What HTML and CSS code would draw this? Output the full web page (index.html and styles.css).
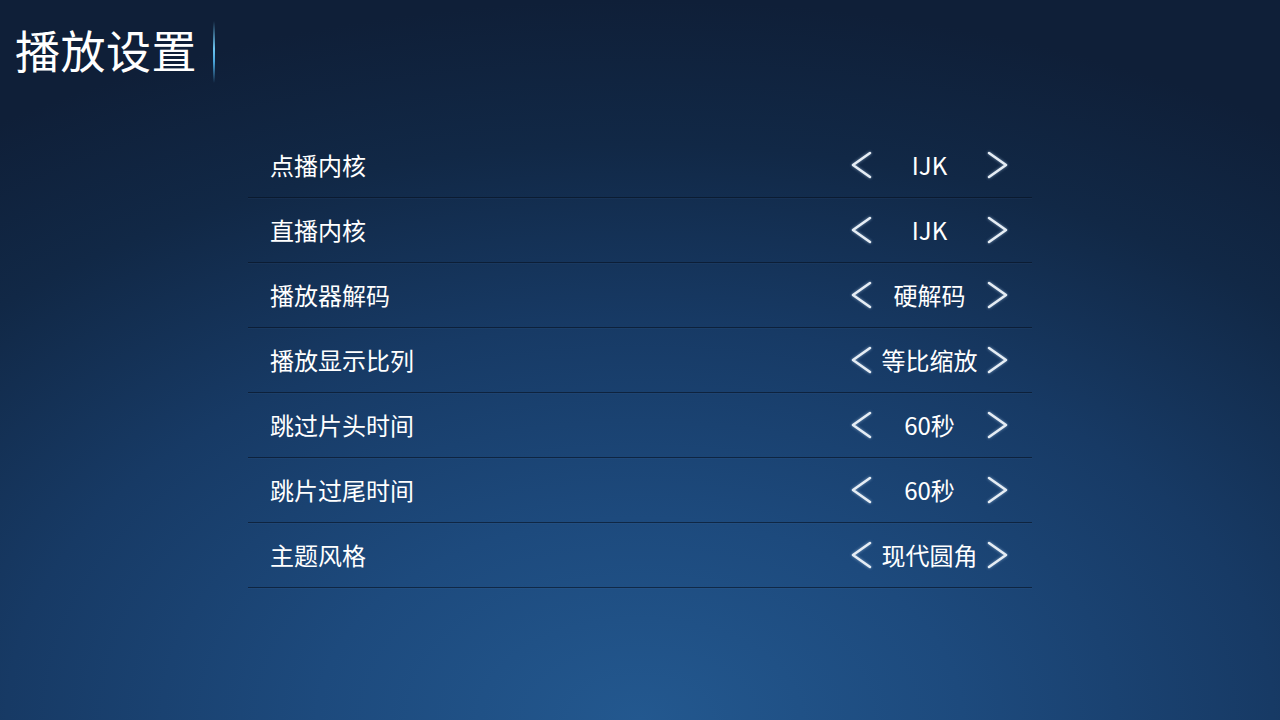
FILE: index.html
```html
<!DOCTYPE html>
<html lang="zh-CN">
<head>
<meta charset="utf-8">
<title>播放设置</title>
<link rel="stylesheet" href="styles.css">
</head>
<body>
<div class="page">
  <header class="header">
    <h1 class="title">播放设置</h1>
    <span class="glow-line"></span>
  </header>
  <ul class="settings">
    <li class="row"><span class="label">点播内核</span><div class="control"><svg class="arrow" viewBox="0 0 22 28"><polyline points="20,2 3,14 20,26"/></svg><span class="value">IJK</span><svg class="arrow" viewBox="0 0 22 28"><polyline points="2,2 19,14 2,26"/></svg></div></li>
    <li class="row"><span class="label">直播内核</span><div class="control"><svg class="arrow" viewBox="0 0 22 28"><polyline points="20,2 3,14 20,26"/></svg><span class="value">IJK</span><svg class="arrow" viewBox="0 0 22 28"><polyline points="2,2 19,14 2,26"/></svg></div></li>
    <li class="row"><span class="label">播放器解码</span><div class="control"><svg class="arrow" viewBox="0 0 22 28"><polyline points="20,2 3,14 20,26"/></svg><span class="value">硬解码</span><svg class="arrow" viewBox="0 0 22 28"><polyline points="2,2 19,14 2,26"/></svg></div></li>
    <li class="row"><span class="label">播放显示比列</span><div class="control"><svg class="arrow" viewBox="0 0 22 28"><polyline points="20,2 3,14 20,26"/></svg><span class="value">等比缩放</span><svg class="arrow" viewBox="0 0 22 28"><polyline points="2,2 19,14 2,26"/></svg></div></li>
    <li class="row"><span class="label">跳过片头时间</span><div class="control"><svg class="arrow" viewBox="0 0 22 28"><polyline points="20,2 3,14 20,26"/></svg><span class="value">60秒</span><svg class="arrow" viewBox="0 0 22 28"><polyline points="2,2 19,14 2,26"/></svg></div></li>
    <li class="row"><span class="label">跳片过尾时间</span><div class="control"><svg class="arrow" viewBox="0 0 22 28"><polyline points="20,2 3,14 20,26"/></svg><span class="value">60秒</span><svg class="arrow" viewBox="0 0 22 28"><polyline points="2,2 19,14 2,26"/></svg></div></li>
    <li class="row"><span class="label">主题风格</span><div class="control"><svg class="arrow" viewBox="0 0 22 28"><polyline points="20,2 3,14 20,26"/></svg><span class="value">现代圆角</span><svg class="arrow" viewBox="0 0 22 28"><polyline points="2,2 19,14 2,26"/></svg></div></li>
  </ul>
</div>
</body>
</html>
```
FILE: styles.css
```css
html, body {
  margin: 0;
  padding: 0;
  width: 1280px;
  height: 720px;
  overflow: hidden;
}
body {
  font-family: "Noto Sans CJK SC", "Noto Sans", sans-serif;
  color: #ffffff;
  background:
    radial-gradient(ellipse 1150px 720px at 50% 100%, #23588f 0%, #1d4a7d 28%, #173a65 55%, #112846 80%, #0f1f38 100%);
}
.page {
  width: 1280px;
  height: 720px;
  display: flex;
  flex-direction: column;
  align-items: center;
}
.header {
  align-self: stretch;
  display: flex;
  align-items: center;
  height: 64px;
  padding: 18px 0 0 15px;
  gap: 16px;
}
.title {
  margin: 0;
  font-size: 45px;
  font-weight: 400;
  line-height: 64px;
  letter-spacing: 0.5px;
  color: #ffffff;
}
.glow-line {
  width: 2px;
  height: 62px;
  margin-top: 4px;
  background: linear-gradient(to bottom, rgba(90,180,232,0) 0%, #6cc4f0 45%, #4aa6dc 65%, rgba(90,180,232,0) 100%);
}
.settings {
  list-style: none;
  margin: 51px 0 0 0;
  padding: 0;
  width: 784px;
}
.row {
  display: flex;
  align-items: center;
  justify-content: space-between;
  height: 64px;
  padding: 0 23px 0 22px;
  border-bottom: 1px solid rgba(6, 16, 32, 0.6);
  box-shadow: 0 1px 0 rgba(120, 160, 210, 0.05);
}
.label {
  font-size: 24px;
  line-height: 1;
  color: #ffffff;
}
.control {
  display: flex;
  align-items: center;
}
.value {
  width: 115px;
  text-align: center;
  font-size: 24px;
  line-height: 1;
  color: #ffffff;
}
.arrow {
  width: 22px;
  height: 28px;
  fill: none;
  stroke: #e6edf4;
  stroke-width: 2.6;
  stroke-linecap: round;
  stroke-linejoin: round;
  filter: drop-shadow(0 0 1.5px rgba(180, 210, 240, 0.6));
}
```
